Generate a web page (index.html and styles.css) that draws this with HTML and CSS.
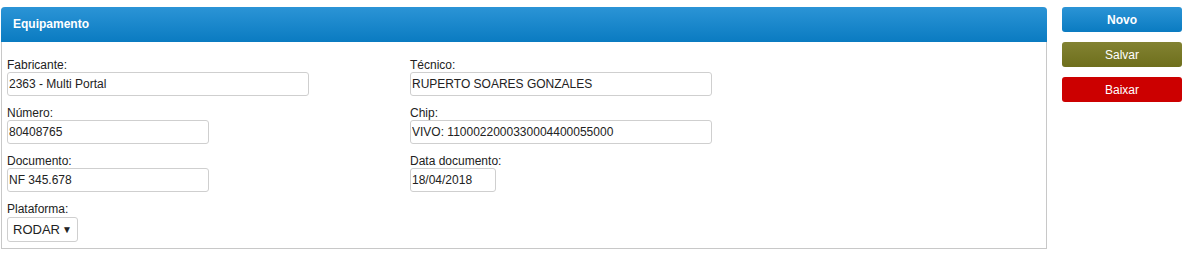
FILE: index.html
```html
<!DOCTYPE html>
<html lang="pt-BR">
<head>
    <meta charset="UTF-8">
    <meta name="viewport" content="width=device-width, initial-scale=1.0">
    <title>Equipamento</title>
    <link rel="stylesheet" href="styles.css">
</head>
<body>

<div class="page">
    <div class="panel">
        <div class="panel-header">Equipamento</div>
        <div class="panel-body">
            <div class="col">
                <div class="field">
                    <label>Fabricante:</label>
                    <input type="text" class="w-large" value="2363 - Multi Portal">
                </div>
                <div class="field">
                    <label>Número:</label>
                    <input type="text" class="w-medium" value="80408765">
                </div>
                <div class="field">
                    <label>Documento:</label>
                    <input type="text" class="w-medium" value="NF 345.678">
                </div>
                <div class="field">
                    <label>Plataforma:</label>
                    <div class="select-wrap">
                        <select>
                            <option>RODAR</option>
                        </select>
                    </div>
                </div>
            </div>
            <div class="col">
                <div class="field">
                    <label>Técnico:</label>
                    <input type="text" class="w-large" value="RUPERTO SOARES GONZALES">
                </div>
                <div class="field">
                    <label>Chip:</label>
                    <input type="text" class="w-large" value="VIVO: 1100022000330004400055000">
                </div>
                <div class="field">
                    <label>Data documento:</label>
                    <input type="text" class="w-date" value="18/04/2018">
                </div>
            </div>
        </div>
    </div>

    <div class="actions">
        <button class="btn btn-novo">Novo</button>
        <button class="btn btn-salvar">Salvar</button>
        <button class="btn btn-baixar">Baixar</button>
    </div>
</div>

</body>
</html>
```

FILE: styles.css
```css
body {
    margin: 0;
    font-family: 'Liberation Sans', Arial, sans-serif;
    font-size: 12px;
    color: #222;
    background-color: #fff;
}
.page {
    display: flex;
    align-items: flex-start;
    gap: 15px;
    padding: 7px 0 0 1px;
}
.panel {
    width: 1044px;
    border: 1px solid #c8c8c8;
    border-top: none;
    border-radius: 4px 4px 0 0;
}
.panel-header {
    height: 35px;
    line-height: 35px;
    margin: 0 -1px;
    padding-left: 12px;
    border-radius: 4px 4px 0 0;
    background: linear-gradient(#2b94d6, #0a7bc1);
    color: #fff;
    font-weight: bold;
    font-size: 12px;
}
.panel-body {
    display: flex;
    padding: 16px 5px 6px 5px;
}
.col {
    width: 403px;
}
.field {
    margin-bottom: 10px;
}
.field:last-child {
    margin-bottom: 0;
}
.field label {
    display: block;
    line-height: 14px;
}
.field input {
    display: block;
    box-sizing: border-box;
    height: 24px;
    margin: 0;
    padding: 0 1px;
    border: 1px solid #cfcfcf;
    border-radius: 3px;
    font-family: 'Liberation Sans', Arial, sans-serif;
    font-size: 12px;
    color: #222;
    background-color: #fff;
}
.w-large {
    width: 302px;
}
.w-medium {
    width: 202px;
}
.w-date {
    width: 86px;
}
.select-wrap {
    position: relative;
    width: 71px;
    margin-top: 1px;
}
.select-wrap select {
    display: block;
    box-sizing: border-box;
    width: 71px;
    height: 25px;
    margin: 0;
    padding: 0 0 0 5px;
    border: 1px solid #cfcfcf;
    border-radius: 3px;
    -webkit-appearance: none;
    appearance: none;
    font-family: 'Liberation Sans', Arial, sans-serif;
    font-size: 13px;
    color: #222;
    background-color: #fff;
}
.select-wrap::after {
    content: "▼";
    position: absolute;
    right: 6px;
    top: 7px;
    font-size: 10px;
    color: #222;
    pointer-events: none;
}
.actions {
    display: flex;
    flex-direction: column;
    gap: 10px;
}
.btn {
    width: 120px;
    height: 25px;
    border: none;
    border-radius: 3px;
    font-family: 'Liberation Sans', Arial, sans-serif;
    font-size: 12px;
    color: #fff;
    cursor: pointer;
}
.btn-novo {
    font-weight: bold;
    background: linear-gradient(#2b94d6, #0a7bc1);
}
.btn-salvar {
    background: linear-gradient(#828232, #6e6f1c);
}
.btn-baixar {
    background-color: #cc0000;
}
```
